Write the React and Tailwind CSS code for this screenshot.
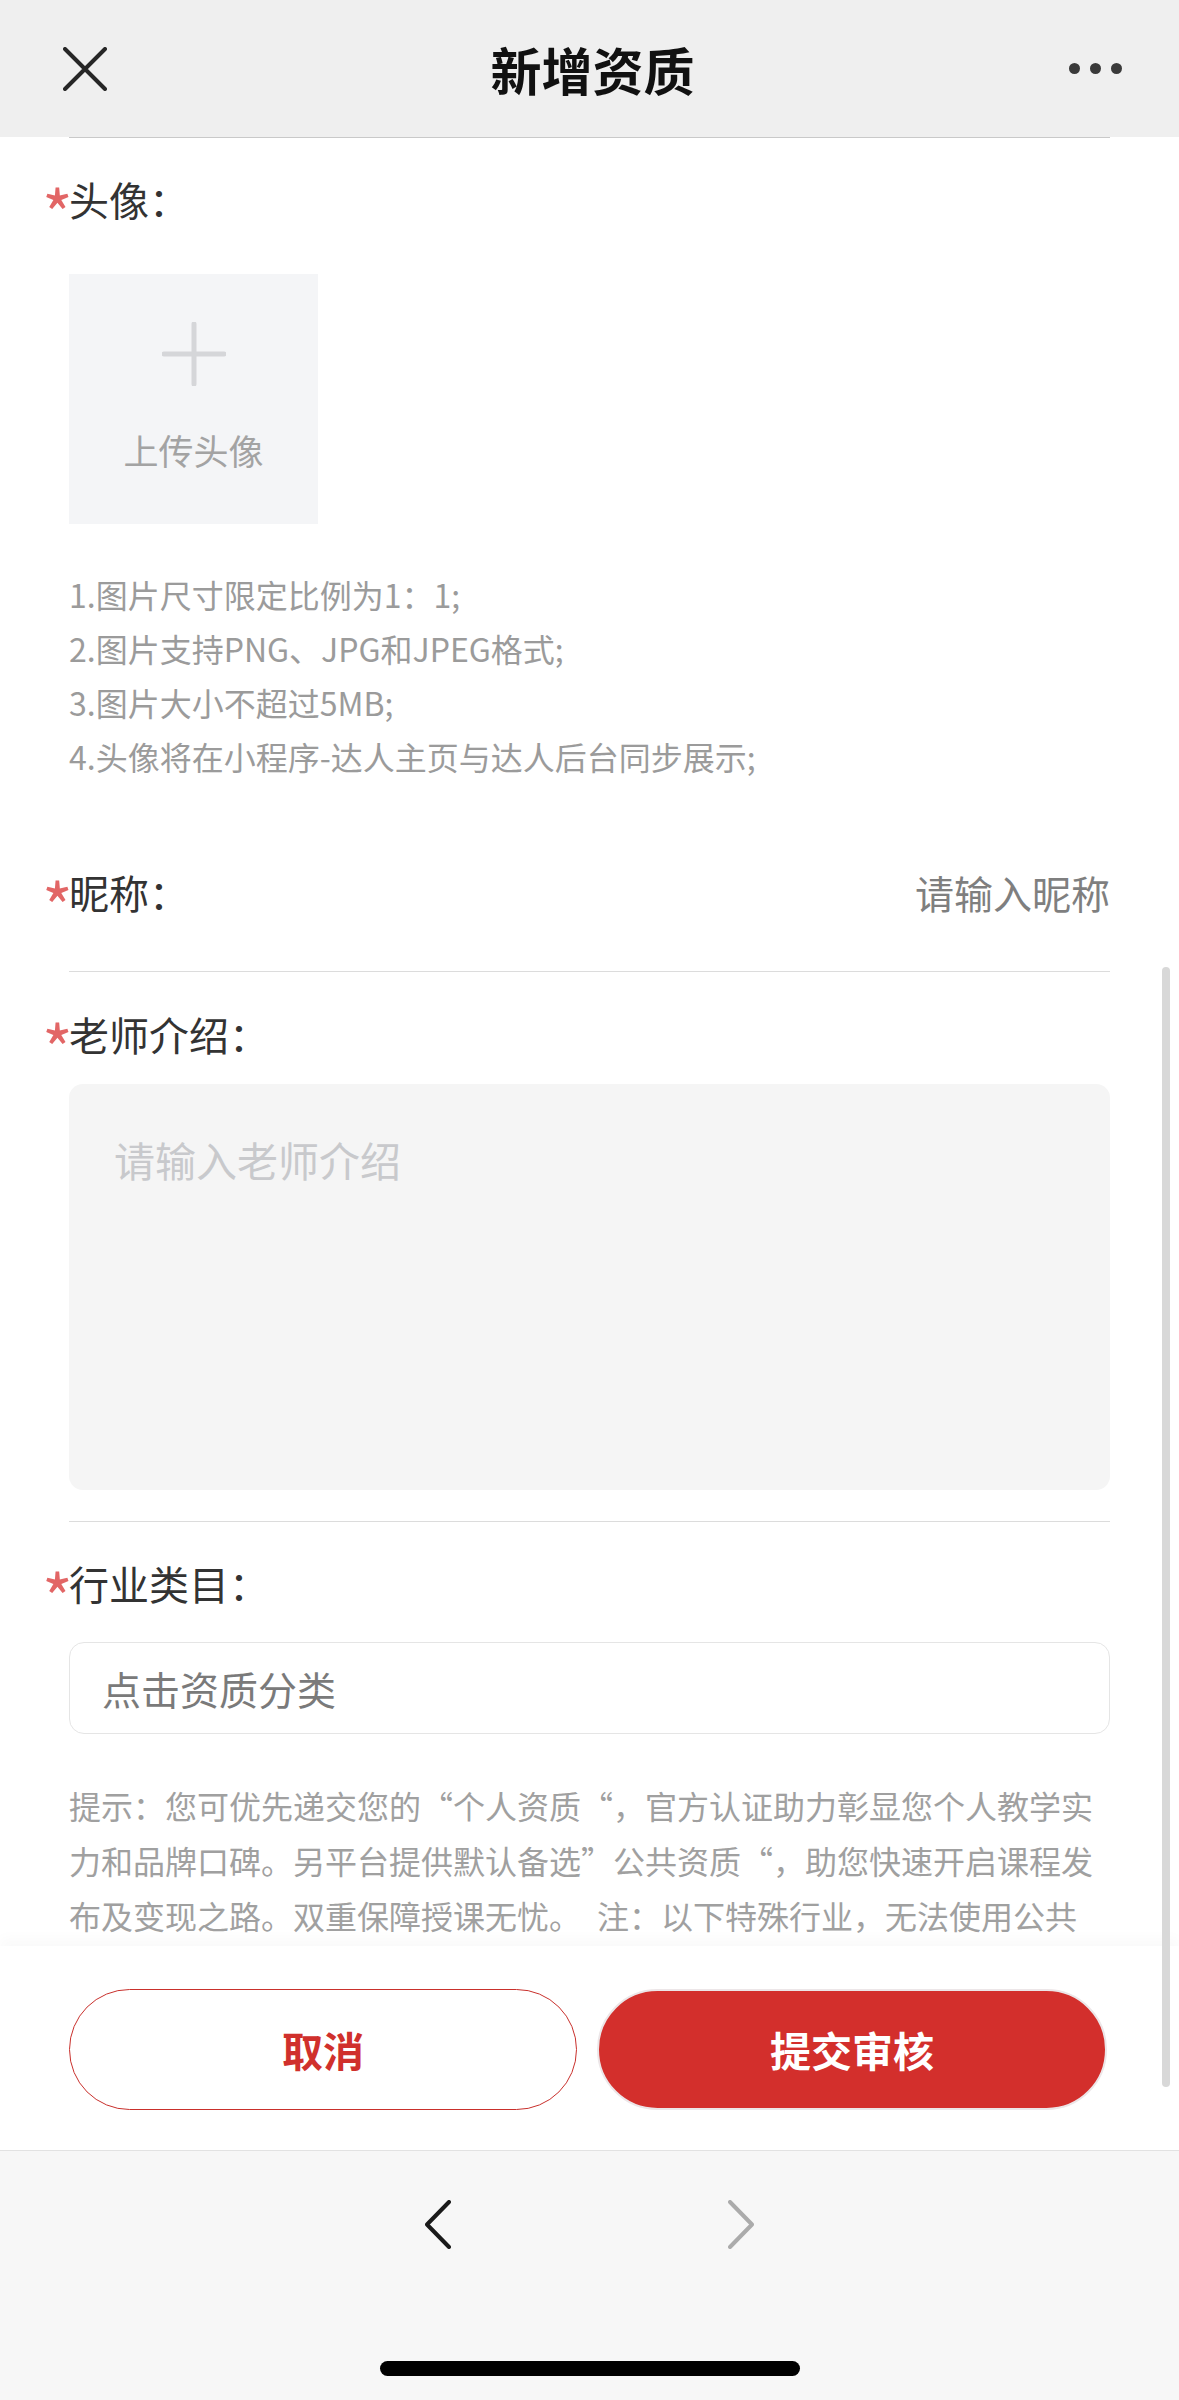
export default function App() {
  const Label = ({ children }) => (
    <div className="flex items-center h-[56px] text-[40px] leading-[56px] text-[#333333]">
      <span className="-ml-[27px] w-[27px] text-[66px] leading-none text-[#e26666] translate-y-[12px]">*</span>
      <span>{children}</span>
    </div>
  );

  return (
    <div className="relative w-[1179px] h-[2400px] overflow-hidden bg-white flex flex-col font-['Noto_Sans_CJK_SC','Noto_Sans',sans-serif]">
      {/* Header */}
      <header className="h-[137px] shrink-0 bg-[#efefef] flex items-center pl-[63px] pr-[57px]">
        <div className="w-[200px] flex items-center">
          <svg width="44" height="44" viewBox="0 0 44 44">
            <path d="M2 2 L42 42 M42 2 L2 42" stroke="#262626" strokeWidth="4" strokeLinecap="round" />
          </svg>
        </div>
        <div className="flex-1 text-center text-[51px] leading-[60px] font-bold text-[#111111]">新增资质</div>
        <div className="w-[200px] flex justify-end items-center gap-[10px]">
          <span className="w-[11px] h-[11px] rounded-full bg-[#3a3a3a]" />
          <span className="w-[11px] h-[11px] rounded-full bg-[#3a3a3a]" />
          <span className="w-[11px] h-[11px] rounded-full bg-[#3a3a3a]" />
        </div>
      </header>

      {/* Content */}
      <main className="flex-1 overflow-hidden px-[69px]">
        <div className="h-px bg-[#c9c9c9]" />

        <div className="mt-[33px]">
          <Label>头像：</Label>
        </div>

        <div className="mt-[47px] w-[249px] h-[250px] bg-[#f4f5f7] flex flex-col items-center pt-[48px]">
          <svg width="64" height="64" viewBox="0 0 64 64">
            <path d="M32 2 L32 62 M2 32 L62 32" stroke="#d5d6d9" strokeWidth="5" strokeLinecap="round" />
          </svg>
          <div className="mt-[40px] text-[35px] leading-[48px] text-[#a3a3a3]">上传头像</div>
        </div>

        <div className="mt-[43px] text-[32px] leading-[54px] text-[#9b9b9b]">
          <p>1.图片尺寸限定比例为1：1;</p>
          <p>2.图片支持PNG、JPG和JPEG格式;</p>
          <p>3.图片大小不超过5MB;</p>
          <p>4.头像将在小程序-达人主页与达人后台同步展示;</p>
        </div>

        <div className="mt-[81px] flex items-center justify-between">
          <Label>昵称：</Label>
          <span className="text-[39px] leading-[56px] text-[#7f7f7f]">请输入昵称</span>
        </div>
        <div className="mt-[51px] h-px bg-[#dcdcdc]" />

        <div className="mt-[34px]">
          <Label>老师介绍：</Label>
        </div>
        <div className="mt-[22px] h-[406px] rounded-[14px] bg-[#f5f5f5] pt-[47px] pl-[45px] text-[41px] leading-[56px] text-[#c8c9cc]">
          请输入老师介绍
        </div>
        <div className="mt-[31px] h-px bg-[#dcdcdc]" />

        <div className="mt-[33px]">
          <Label>行业类目：</Label>
        </div>
        <div className="mt-[31px] h-[92px] border border-[#e5e5e5] rounded-[15px] pl-[32px] flex items-center text-[39px] text-[#7a7a7a]">
          点击资质分类
        </div>

        <p className="mt-[44px] text-[32px] leading-[55px] text-[#a0a0a0]">
          提示：您可优先递交您的“个人资质“，官方认证助力彰显您个人教学实力和品牌口碑。另平台提供默认备选”公共资质“，助您快速开启课程发布及变现之路。双重保障授课无忧。　注：以下特殊行业，无法使用公共
        </p>
      </main>

      {/* Bottom action bar */}
      <div className="h-[204px] shrink-0 bg-white shadow-[0_-8px_12px_rgba(0,0,0,0.025)] flex gap-[20px] pt-[43px] pl-[69px] pr-[72px]">
        <button className="flex-1 h-[121px] rounded-full border border-[#c9302c] text-[41px] font-bold text-[#d0302c]">
          取消
        </button>
        <button className="flex-1 h-[121px] rounded-full bg-[#d32f2c] border-2 border-[#ece6e8] text-[41px] font-bold text-white">
          提交审核
        </button>
      </div>

      {/* Browser toolbar */}
      <div className="h-[250px] shrink-0 bg-[#f7f7f7] border-t border-[#e2e2e2] flex flex-col items-center pt-[49px]">
        <div className="flex gap-[277px]">
          <svg width="26" height="49" viewBox="0 0 26 49">
            <path d="M24 2 L2 24.5 L24 47" fill="none" stroke="#1a1a1a" strokeWidth="4" strokeLinecap="round" strokeLinejoin="round" />
          </svg>
          <svg width="26" height="49" viewBox="0 0 26 49">
            <path d="M2 2 L24 24.5 L2 47" fill="none" stroke="#ababab" strokeWidth="4" strokeLinecap="round" strokeLinejoin="round" />
          </svg>
        </div>
        <div className="mt-[112px] w-[420px] h-[15px] rounded-full bg-black" />
      </div>

      {/* Scrollbar overlay */}
      <div className="absolute right-[9px] top-[967px] w-[8px] h-[1120px] rounded-full bg-[#d8d8d8]" />
    </div>
  );
}
